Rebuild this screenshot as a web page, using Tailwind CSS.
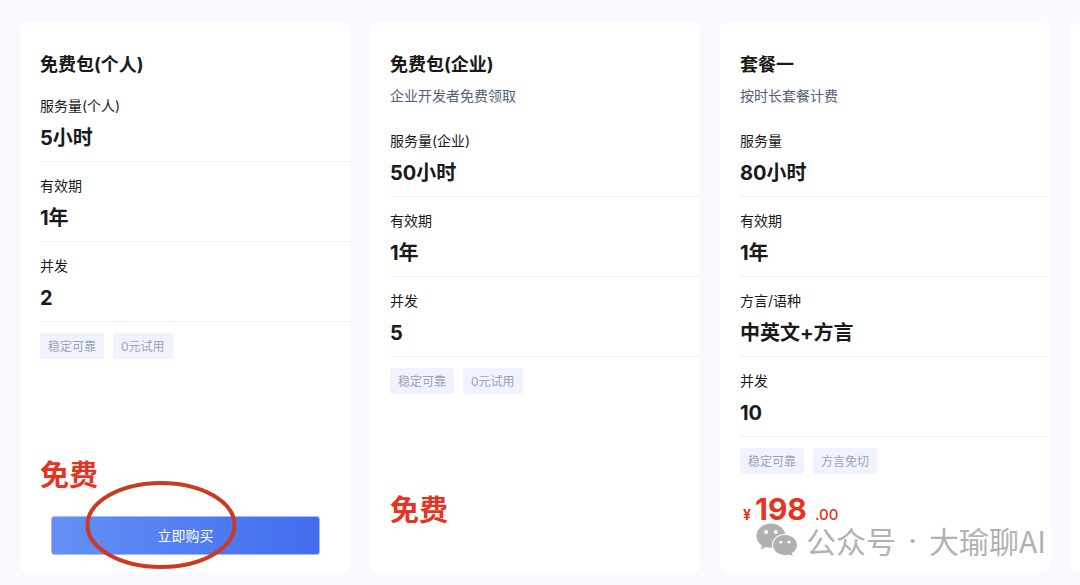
<!DOCTYPE html>
<html lang="zh-CN">
<head>
  <meta charset="UTF-8" />
  <meta name="viewport" content="width=device-width, initial-scale=1" />
  <title>套餐价格</title>
  <script src="https://cdn.jsdelivr.net/npm/@tailwindcss/browser@4"></script>
</head>
<body class="bg-[#f8faff] text-[#1a1a1a] font-['Inter','Noto_Sans_CJK_SC',sans-serif]">

  <main class="relative flex gap-5 pl-5 pt-[22px] pb-3 overflow-hidden">

    <!-- Free plan, personal -->
    <article class="flex flex-col shrink-0 w-[calc((100%-70px)/3)] bg-white rounded-lg pt-[29px] pb-[18px] pl-5">
      <h2 class="text-lg leading-7 font-bold">免费包(个人)</h2>
      <dl class="mt-[3px]">
        <div class="border-b border-[#f2f2f4] pt-3.5 pb-[9px]">
          <dt class="text-sm leading-5">服务量(个人)</dt>
          <dd class="mt-2 text-xl leading-7 font-bold">5小时</dd>
        </div>
        <div class="border-b border-[#f2f2f4] pt-3.5 pb-[9px]">
          <dt class="text-sm leading-5">有效期</dt>
          <dd class="mt-2 text-xl leading-7 font-bold">1年</dd>
        </div>
        <div class="border-b border-[#f2f2f4] pt-3.5 pb-[9px]">
          <dt class="text-sm leading-5">并发</dt>
          <dd class="mt-2 text-xl leading-7 font-bold">2</dd>
        </div>
      </dl>
      <ul class="flex gap-[9px] mt-[11px] text-xs leading-6 text-[#98a2b8]">
        <li class="bg-[#f0f3ff] rounded-[3px] px-2 pt-0.5">稳定可靠</li>
        <li class="bg-[#f0f3ff] rounded-[3px] px-2 pt-0.5">0元试用</li>
      </ul>
      <p class="mt-auto text-[29px] leading-10 font-bold text-[#e63322]">免费</p>
      <div class="relative mt-5 ml-[11px] mr-[30px]">
        <button type="button" class="block w-full h-[39px] rounded-[3px] border border-[#a9bdf0] bg-linear-to-r from-[#6490f6] to-[#426cee] text-sm text-white">立即购买</button>
        <!-- hand-drawn highlight around the button -->
        <svg class="absolute -top-9 left-[34px] w-[152px] h-[90px] pointer-events-none" viewBox="0 0 152 90" fill="none">
          <ellipse cx="76" cy="45" rx="73.5" ry="42" stroke="#cb3a22" stroke-width="4" />
        </svg>
      </div>
    </article>

    <!-- Free plan, company -->
    <article class="flex flex-col shrink-0 w-[calc((100%-70px)/3)] bg-white rounded-lg pt-[29px] pb-[42px] pl-5">
      <h2 class="text-lg leading-7 font-bold">免费包(企业)</h2>
      <p class="pt-[7px] pb-2 text-sm leading-5 text-[#526079]">企业开发者免费领取</p>
      <dl class="mt-[3px]">
        <div class="border-b border-[#f2f2f4] pt-3.5 pb-[9px]">
          <dt class="text-sm leading-5">服务量(企业)</dt>
          <dd class="mt-2 text-xl leading-7 font-bold">50小时</dd>
        </div>
        <div class="border-b border-[#f2f2f4] pt-3.5 pb-[9px]">
          <dt class="text-sm leading-5">有效期</dt>
          <dd class="mt-2 text-xl leading-7 font-bold">1年</dd>
        </div>
        <div class="border-b border-[#f2f2f4] pt-3.5 pb-[9px]">
          <dt class="text-sm leading-5">并发</dt>
          <dd class="mt-2 text-xl leading-7 font-bold">5</dd>
        </div>
      </dl>
      <ul class="flex gap-[9px] mt-[11px] text-xs leading-6 text-[#98a2b8]">
        <li class="bg-[#f0f3ff] rounded-[3px] px-2 pt-0.5">稳定可靠</li>
        <li class="bg-[#f0f3ff] rounded-[3px] px-2 pt-0.5">0元试用</li>
      </ul>
      <p class="mt-auto text-[29px] leading-10 font-bold text-[#e63322]">免费</p>
    </article>

    <!-- Plan 1 -->
    <article class="flex flex-col shrink-0 w-[calc((100%-70px)/3)] bg-white rounded-lg pt-[29px] pb-11 pl-5">
      <h2 class="text-lg leading-7 font-bold">套餐一</h2>
      <p class="pt-[7px] pb-2 text-sm leading-5 text-[#526079]">按时长套餐计费</p>
      <dl class="mt-[3px]">
        <div class="border-b border-[#f2f2f4] pt-3.5 pb-[9px]">
          <dt class="text-sm leading-5">服务量</dt>
          <dd class="mt-2 text-xl leading-7 font-bold">80小时</dd>
        </div>
        <div class="border-b border-[#f2f2f4] pt-3.5 pb-[9px]">
          <dt class="text-sm leading-5">有效期</dt>
          <dd class="mt-2 text-xl leading-7 font-bold">1年</dd>
        </div>
        <div class="border-b border-[#f2f2f4] pt-3.5 pb-[9px]">
          <dt class="text-sm leading-5">方言/语种</dt>
          <dd class="mt-2 text-xl leading-7 font-bold">中英文+方言</dd>
        </div>
        <div class="border-b border-[#f2f2f4] pt-3.5 pb-[9px]">
          <dt class="text-sm leading-5">并发</dt>
          <dd class="mt-2 text-xl leading-7 font-bold">10</dd>
        </div>
      </dl>
      <ul class="flex gap-[9px] mt-[11px] text-xs leading-6 text-[#98a2b8]">
        <li class="bg-[#f0f3ff] rounded-[3px] px-2 pt-0.5">稳定可靠</li>
        <li class="bg-[#f0f3ff] rounded-[3px] px-2 pt-0.5">方言免切</li>
      </ul>
      <p class="flex items-baseline gap-1 h-10 mt-[15px] pl-[3px] text-[#e63322]">
        <span class="text-sm leading-4 font-bold">¥</span>
        <span class="text-[30px] leading-10 font-bold">198</span>
        <span class="pl-1 text-[15px] leading-4 font-medium">.00</span>
      </p>
    </article>

    <!-- Next plan, cut off by the edge -->
    <article class="shrink-0 w-[calc((100%-70px)/3)] bg-white rounded-lg"></article>

    <!-- Watermark -->
    <div class="absolute right-[34px] bottom-7 flex items-center text-[30px] leading-8 text-[#b2b2b2] font-['Noto_Sans_CJK_SC',sans-serif] whitespace-nowrap">
      <svg class="w-[42px] h-[34px] mr-2" viewBox="0 0 42 34">
        <path fill="#b0b0b0" d="M15 0.500C6.800.500.500 6 .500 13c0 4 2 7.400 5.500 9.800L4.600 26.500l5.400-2.400c1.600.5 3.200.7 5 .7 8 0 14.500-5.300 14.500-11.800S23 .500 15 .500Z" />
        <path fill="#b0b0b0" stroke="#fff" stroke-width="1.200" d="M29 11.500c-7 0-12.500 4.700-12.500 10.700S22 32.800 29 32.800c1.500 0 3-.2 4.300-.7l4.200 2-1-3.600c3-2 5-4.900 5-8.300 0-6-5.500-10.700-12.500-10.700Z" />
        <g fill="#fff">
          <circle cx="10.200" cy="9" r="1.900" />
          <circle cx="19.800" cy="9" r="1.900" />
          <circle cx="24.800" cy="19" r="1.600" />
          <circle cx="33" cy="19" r="1.600" />
        </g>
      </svg>
      <span>公众号</span>
      <span class="w-[33px] text-center font-['Inter',sans-serif]">·</span>
      <span>大瑜聊AI</span>
    </div>

  </main>

</body>
</html>
